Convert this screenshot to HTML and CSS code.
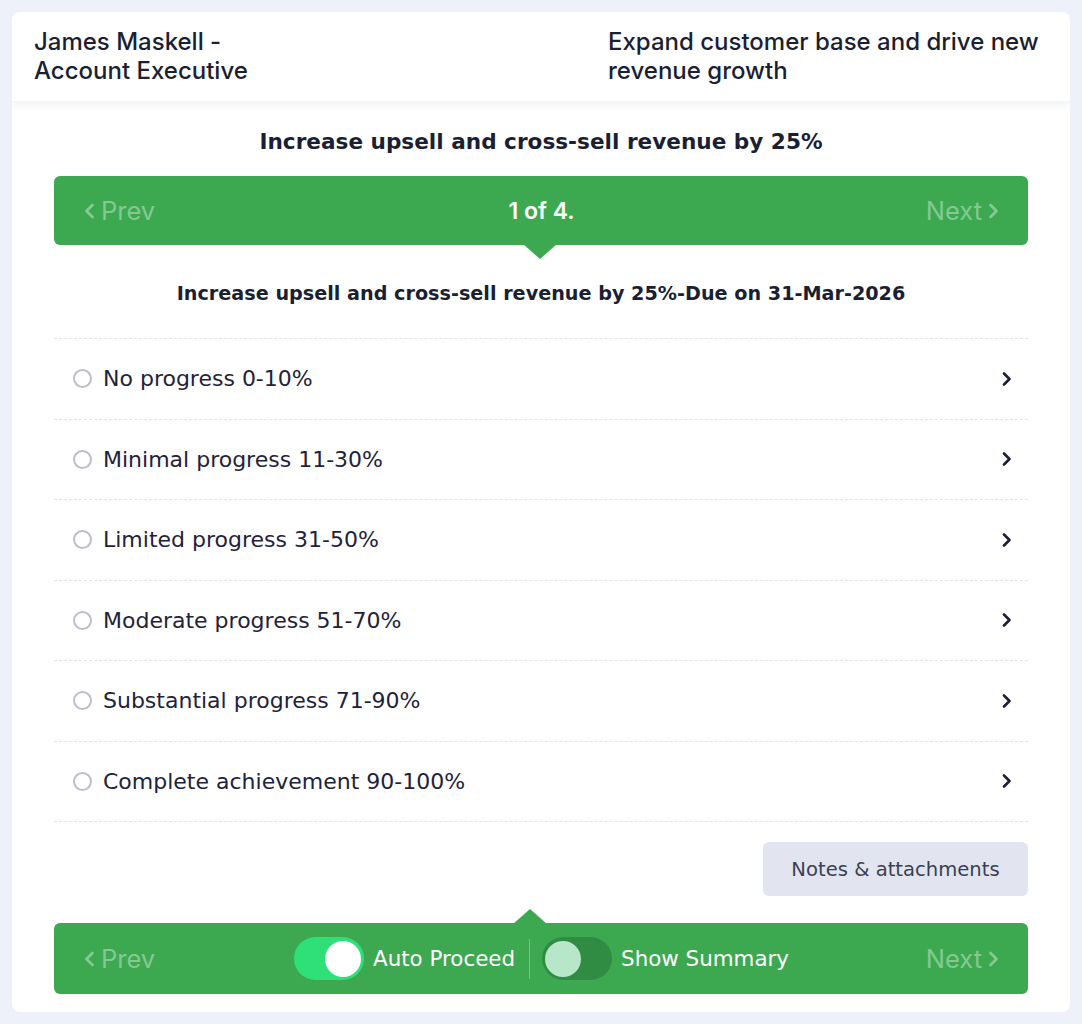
FILE: index.html
```html
<!DOCTYPE html>
<html>
<head>
<meta charset="utf-8">
<link rel="stylesheet" href="styles.css">
</head>
<body>
<div class="card">
  <header class="header">
    <div class="h-left">James Maskell -<br>Account Executive</div>
    <div class="h-right">Expand customer base and drive new revenue growth</div>
  </header>
  <main class="content">
    <h1 class="title">Increase upsell and cross-sell revenue by 25%</h1>
    <div class="bar bar-top">
      <span class="nav prev"><svg width="12" height="18" viewBox="0 0 12 18"><path d="M9.5 3 L3.5 9 L9.5 15" fill="none" stroke="currentColor" stroke-width="2.8" stroke-linecap="round" stroke-linejoin="round"/></svg>Prev</span>
      <span class="count">1 of 4.</span>
      <span class="nav next">Next<svg width="12" height="18" viewBox="0 0 12 18"><path d="M2.5 3 L8.5 9 L2.5 15" fill="none" stroke="currentColor" stroke-width="2.8" stroke-linecap="round" stroke-linejoin="round"/></svg></span>
      <span class="pointer-down"></span>
    </div>
    <h2 class="subtitle">Increase upsell and cross-sell revenue by 25%-Due on 31-Mar-2026</h2>
    <ul class="options">
      <li class="option"><span class="radio"></span><span class="opt-text">No progress 0-10%</span><svg class="chev" width="12" height="16" viewBox="0 0 12 16"><path d="M3 2.5 L8.5 8 L3 13.5" fill="none" stroke="#1b1f33" stroke-width="2.6" stroke-linecap="round" stroke-linejoin="round"/></svg></li>
      <li class="option"><span class="radio"></span><span class="opt-text">Minimal progress 11-30%</span><svg class="chev" width="12" height="16" viewBox="0 0 12 16"><path d="M3 2.5 L8.5 8 L3 13.5" fill="none" stroke="#1b1f33" stroke-width="2.6" stroke-linecap="round" stroke-linejoin="round"/></svg></li>
      <li class="option"><span class="radio"></span><span class="opt-text">Limited progress 31-50%</span><svg class="chev" width="12" height="16" viewBox="0 0 12 16"><path d="M3 2.5 L8.5 8 L3 13.5" fill="none" stroke="#1b1f33" stroke-width="2.6" stroke-linecap="round" stroke-linejoin="round"/></svg></li>
      <li class="option"><span class="radio"></span><span class="opt-text">Moderate progress 51-70%</span><svg class="chev" width="12" height="16" viewBox="0 0 12 16"><path d="M3 2.5 L8.5 8 L3 13.5" fill="none" stroke="#1b1f33" stroke-width="2.6" stroke-linecap="round" stroke-linejoin="round"/></svg></li>
      <li class="option"><span class="radio"></span><span class="opt-text">Substantial progress 71-90%</span><svg class="chev" width="12" height="16" viewBox="0 0 12 16"><path d="M3 2.5 L8.5 8 L3 13.5" fill="none" stroke="#1b1f33" stroke-width="2.6" stroke-linecap="round" stroke-linejoin="round"/></svg></li>
      <li class="option"><span class="radio"></span><span class="opt-text">Complete achievement 90-100%</span><svg class="chev" width="12" height="16" viewBox="0 0 12 16"><path d="M3 2.5 L8.5 8 L3 13.5" fill="none" stroke="#1b1f33" stroke-width="2.6" stroke-linecap="round" stroke-linejoin="round"/></svg></li>
    </ul>
    <div class="actions">
      <button class="notes-btn">Notes &amp; attachments</button>
    </div>
    <div class="bar bar-bottom">
      <span class="pointer-up"></span>
      <span class="nav prev"><svg width="12" height="18" viewBox="0 0 12 18"><path d="M9.5 3 L3.5 9 L9.5 15" fill="none" stroke="currentColor" stroke-width="2.8" stroke-linecap="round" stroke-linejoin="round"/></svg>Prev</span>
      <div class="toggles">
        <span class="toggle on"><span class="knob"></span></span>
        <span class="toggle-label">Auto Proceed</span>
        <span class="divider"></span>
        <span class="toggle off"><span class="knob"></span></span>
        <span class="toggle-label">Show Summary</span>
      </div>
      <span class="nav next">Next<svg width="12" height="18" viewBox="0 0 12 18"><path d="M2.5 3 L8.5 9 L2.5 15" fill="none" stroke="currentColor" stroke-width="2.8" stroke-linecap="round" stroke-linejoin="round"/></svg></span>
    </div>
  </main>
</div>
</body>
</html>
```

FILE: styles.css
```css
* { box-sizing: border-box; }
html, body { margin: 0; padding: 0; }
body {
  background: #eef1fa;
  padding: 12px;
  font-family: Inter, Roboto, "Liberation Sans", sans-serif;
  color: #1b1f33;
}
.card {
  width: 1058px;
  height: 1000px;
  background: #fff;
  border-radius: 8px;
  overflow: hidden;
}
.header {
  height: 89px;
  display: grid;
  grid-template-columns: 574px 1fr;
  padding: 15px 22px 0 22px;
  font-family: Inter, Roboto, sans-serif;
  font-size: 24px;
  font-weight: 500;
  line-height: 29px;
  color: #1b1f33;
  box-shadow: 0 4px 8px rgba(30, 40, 80, 0.07);
  position: relative;
}
.h-right { padding-right: 4px; }
.content {
  padding: 0 42px;
  font-family: "DejaVu Sans", sans-serif;
}
.title {
  margin: 26px 0 0;
  text-align: center;
  font-size: 21.6px;
  line-height: 30px;
  font-weight: 600;
  color: #1b1f33;
}
.bar {
  position: relative;
  background: #3ca951;
  border-radius: 6px;
  display: flex;
  align-items: center;
  justify-content: space-between;
  padding: 0 28px 0 29px;
}
.bar-top {
  margin-top: 19px;
  height: 69px;
}
.nav {
  display: flex;
  align-items: center;
  gap: 6px;
  font-family: Inter, Roboto, sans-serif;
  font-size: 25.5px;
  color: rgba(255, 255, 255, 0.38);
  width: 120px;
}
.nav.next { justify-content: flex-end; }
.count {
  font-family: Inter, Roboto, sans-serif;
  font-weight: 600;
  font-size: 23px;
  color: #fff;
}
.pointer-down {
  position: absolute;
  left: 469px;
  bottom: -14px;
  width: 0; height: 0;
  border-left: 17px solid transparent;
  border-right: 17px solid transparent;
  border-top: 15px solid #3ca951;
}
.pointer-up {
  position: absolute;
  left: 459px;
  top: -14px;
  width: 0; height: 0;
  border-left: 17px solid transparent;
  border-right: 17px solid transparent;
  border-bottom: 15px solid #3ca951;
}
.subtitle {
  margin: 35px 0 0;
  text-align: center;
  font-size: 19.2px;
  line-height: 28px;
  font-weight: 600;
  color: #1b1f33;
}
.options {
  list-style: none;
  margin: 30px 0 0;
  padding: 0;
  border-top: 1px dashed #e2e4ec;
}
.option {
  height: 80.5px;
  display: flex;
  align-items: center;
  padding: 0 15px 0 19px;
  border-bottom: 1px dashed #e2e4ec;
}
.radio {
  width: 19px;
  height: 19px;
  border: 2px solid #bdbdcb;
  border-radius: 50%;
  margin-right: 11px;
  flex: none;
}
.opt-text {
  flex: 1;
  font-size: 22px;
  color: #1f2339;
}
.chev { flex: none; }
.actions {
  display: flex;
  justify-content: flex-end;
  margin-top: 20px;
}
.notes-btn {
  width: 265px;
  height: 54px;
  border: none;
  border-radius: 6px;
  background: #e2e5ef;
  font-family: "DejaVu Sans", sans-serif;
  font-size: 19.6px;
  color: #3a3f52;
}
.bar-bottom {
  margin-top: 27px;
  height: 71px;
}
.toggles {
  display: flex;
  align-items: center;
}
.toggle {
  width: 70px;
  height: 43px;
  border-radius: 22px;
  position: relative;
  flex: none;
}
.toggle.on { background: #2fe078; }
.toggle.off { background: #2f8c42; }
.knob {
  position: absolute;
  top: 4px;
  width: 36px;
  height: 36px;
  border-radius: 50%;
}
.toggle.on .knob { right: 3px; background: #fff; }
.toggle.off .knob { left: 3px; background: #b8e6c8; }
.toggle-label {
  font-family: "DejaVu Sans", sans-serif;
  font-size: 21.4px;
  color: #fff;
  margin-left: 9px;
}
.divider {
  width: 1px;
  height: 40px;
  background: rgba(255, 255, 255, 0.3);
  margin: 0 12px 0 14px;
}
```
